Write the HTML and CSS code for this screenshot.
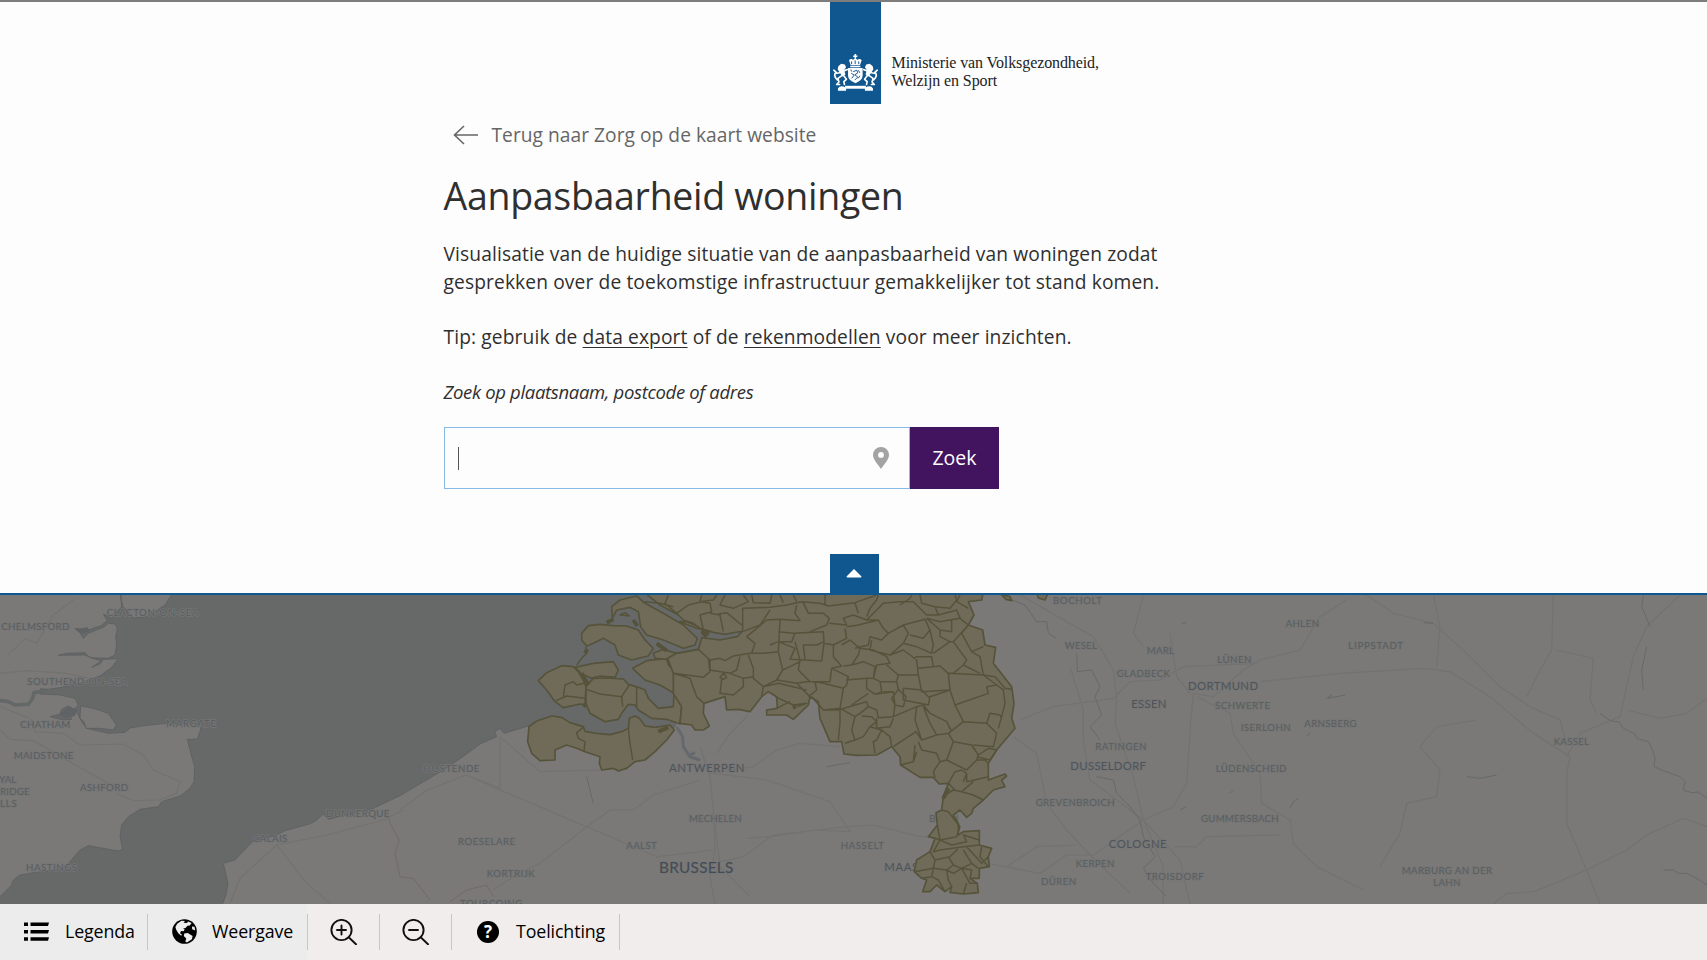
FILE: index.html
```html
<!DOCTYPE html>
<html lang="nl">
<head>
<meta charset="utf-8">
<title>Aanpasbaarheid woningen</title>
<link rel="stylesheet" href="styles.css">
</head>
<body>
<div class="page">
  <section class="panel">
    <header class="brand">
      <div class="ribbon">
        <svg class="arms" viewBox="0 0 138 114" fill="none" stroke="#fff" stroke-width="5" stroke-linecap="round" stroke-linejoin="round">
          <g fill="#fff" stroke="none">
            <path d="M66 0h5v5h4v4h-4v6h-5V9h-4V5h4z"/>
            <path d="M49 19q6-7 13-1l6-5 7 5q7-6 13 1l-5 15H54z"/>
            <path d="M53 36h31v5H53z"/>
            <path d="M46 43h45v23q0 14-22 24-23-10-23-24z"/>
            <path d="M37 98h64v9H37z"/>
            <path d="M15 106q5-9 17-6l8 4v9H15zM123 106q-5-9-17-6l-8 4v9h25z"/>
            <path d="M16 38l9-8 11 2 4 9-6 8 4 14-9 6-9-12-6-10zM122 38l-9-8-11 2-4 9 6 8-4 14 9 6 9-12 6-10z"/>
          </g>
          <path d="M33 52l11-4M28 66l-13 9 3 11-7 8h9M33 67l8 11-8 7 2 9M20 58L8 60M13 80Q-1 66 9 56L2 50M105 52l-11-4M110 66l13 9-3 11 7 8h-9M105 67l-8 11 8 7-2 9M118 58l12 2M125 80q14-14 4-24l7-6"/>
          <path stroke="#11578f" stroke-width="3" d="M57 24v6M68 21v9M79 24v6M63 54l10-4 3 8-9 6 9 7-8 8M57 60l8 5-7 9M78 51l4 6M55 49l2 4M82 68l-4 6"/>
        </svg>
      </div>
      <p class="ministry">Ministerie van Volksgezondheid,<br>Welzijn en Sport</p>
    </header>
    <main class="intro">
      <a class="back">
        <svg class="back-arrow" viewBox="0 0 26 20" fill="none" stroke="#666" stroke-width="1.6"><path d="M11 1L1.500 10 11 19M1.500 10H25"/></svg>
        <span>Terug naar Zorg op de kaart website</span>
      </a>
      <h1 class="title">Aanpasbaarheid woningen</h1>
      <p class="text lead">Visualisatie van de huidige situatie van de aanpasbaarheid van woningen zodat<br>gesprekken over de toekomstige infrastructuur gemakkelijker tot stand komen.</p>
      <p class="text tip">Tip: gebruik de <a class="link">data export</a> of de <a class="link">rekenmodellen</a> voor meer inzichten.</p>
      <p class="hint">Zoek op plaatsnaam, postcode of adres</p>
      <div class="search">
        <div class="field">
          <span class="caret"></span>
          <svg class="pin" viewBox="0 0 16 22"><path fill="#a3a3a3" fill-rule="evenodd" d="M8 0a8 8 0 0 0-8 8c0 5 5 9 8 14 3-5 8-9 8-14a8 8 0 0 0-8-8zm0 5a2.900 2.900 0 1 1 0 5.800A2.900 2.900 0 0 1 8 5z"/></svg>
        </div>
        <button class="submit">Zoek</button>
      </div>
    </main>
    <div class="collapse"><svg class="collapse-icon" viewBox="0 0 16 9"><path fill="#fff" d="M8 0l7.500 7.500q0 1-1 1h-13q-1 0-1-1z"/></svg></div>
  </section>

  <svg class="map" viewBox="0 15 5121 927" preserveAspectRatio="none">
    <rect class="sea" y="0" width="5121" height="960"/>
    <!-- England -->
    <path class="land" d="M-10 5H520L495 45 470 62 440 80 400 84 380 60 368 50 362 15 365 50 335 85 310 72 322 92 305 106 265 120 225 115 240 128 250 145 265 130 310 112 325 100 345 102 352 115 347 140 350 165 345 195 325 205 270 203 255 188 200 190 175 196 255 195 280 206 305 212 275 232 300 222 310 208 355 206 335 232 300 258 270 268 240 280 185 292 145 298 122 296 120 312 180 315 225 325 235 345 222 358 205 348 185 358 180 372 150 380 190 390 215 388 208 370 230 365 245 395 260 415 325 430 375 427 390 414 440 406 500 400 605 402 600 425 592 447 562 448 575 500 584 530 582 575 570 595 540 618 485 635 475 650 420 658 385 680 365 705 360 740 368 778 355 783 265 767 240 780 210 815 185 838 100 848 60 855 40 870 35 885-10 930Z"/>
    <path class="land" d="M242 348L280 355 325 370 349 405 340 420 300 415 258 415 252 395 240 385Z"/>
    <path class="inlet" d="M0 332L22 334 45 345 85 343 98 325 102 308 124 304"/>
    <path class="dense-water" d="M180 372L205 352 232 358 225 378 195 385ZM225 118L262 112 270 122 245 132Z"/>
    <!-- Continent -->
    <path class="land" d="M660 960L678 915 684 880 670 820 705 810 757 755 830 735 855 722 935 700 950 690 970 672 985 688 1120 655 1200 617 1330 540 1400 492 1440 462 1490 440 1484 425 1500 415 1512 430 1585 408 1900 470 2025 410 2040 260 2700 5H5131V960Z"/>
    <path class="inlet scheldt" d="M2030 410L2048 440 2050 470 2070 500 2100 510M2070 495L2085 488"/>
    <!-- Roads, rivers and borders -->
    <g class="roads">
      <path d="M0 250L80 242 200 250 290 270M20 200L75 145 110 160 160 75 220 30M0 350L90 385 105 425 190 430 240 465 370 462 430 495 460 540 540 575 530 610 480 630 400 632 350 610M0 420L30 448 100 452 200 510 360 600"/>
      <path d="M690 940L720 865 830 765 980 735 1150 690 1210 660M830 765L920 880 990 940M1200 660L1280 600 1400 555 1500 600 1760 710 1970 800 2060 790 2140 780M1500 440V595L1400 555M1760 710L1620 820 1540 860 1480 900M1760 710L1830 660 1900 660 1960 615 2100 570M1500 440L1620 545 1800 540M2100 470L2130 560 2140 660 2145 780 2130 860 2145 942M2140 660L2160 830 2250 920M2150 490L2190 430 2240 380 2250 340"/>
      <path d="M2140 550L2300 570 2490 635 2550 725 2450 720 2310 740 2240 745M2140 820L2230 800 2320 735 2540 710 2620 705 2760 740 2810 740M2130 550L2260 530 2330 480 2400 460 2520 470M2960 820L3120 850 3200 795 3280 795 3430 690 3520 650 3560 580 3570 420 3580 310 3640 320 3730 240 3780 210 3900 180 3960 80 4040 30M3020 830L3110 770 3230 765"/>
      <path d="M3060 15L3280 140 3340 240 3350 320 3345 400 3400 560 3430 690 3490 830 3490 942M3060 390L3160 350 3340 325 3390 275 3480 270 3550 230 3770 220M3430 15L3400 130 3430 170M3510 130L3530 260 3570 310M3210 230L3250 360 3250 450 3270 570 3430 690 3540 810 3570 942M3040 440L3110 490 3140 640 3200 720 3270 795 3390 910M3590 320L3690 370 3700 430 3780 550 3785 640 3870 690 3880 760 3950 830 4090 900M3520 770L3590 770 3620 740 3840 735M3780 275L4020 250 4270 235 4350 245 4470 320 4600 430 4710 500 4700 550 4700 700 4760 840 4800 942M4100 15L4180 70 4300 100 4400 190 4500 290 4590 350 4680 390 4700 460M4300 15L4320 110 4310 230M4700 500L4740 430 4860 380 4900 200 4940 110 5040 15M4880 360L4980 385 5060 370 5121 325M4480 942L4520 910 4600 905 4760 840 4880 780 4940 735 5050 685 5121 710M4660 15L4655 180 4620 240 4580 320M4430 390L4310 410 4260 470 4320 540 4310 620 4220 640 4200 730 4140 830M4670 180L4780 205 4770 330 4790 370"/>
      <path class="stream" d="M3010 20L3075 45 3110 95 3140 95 3145 130 3170 145M3230 190L3232 245 3275 240 3300 290 3285 320 3305 375 3270 410 3300 450M3290 560L3340 570 3350 610 3390 650 3420 690 3430 740 3465 800 3430 835 3460 880 3500 920M4930 15L4925 50 4950 110M4940 170L4925 240 4930 300M4800 370L4830 392 4858 396 4870 415 4905 432 4910 445 4945 455 4958 480 4965 505 4962 530 4990 542 5040 560 5055 575 5050 600 5075 608 5095 606 5121 625M4990 840L5020 840 5035 850 5060 850 5085 862 5121 885M3980 325L3995 315 3985 325 4035 315M3690 610L3700 600M3540 660L3560 650M3870 655L3880 635 3895 625M4400 560L4440 565 4490 555M3545 100L3560 98M3920 440L3930 428M4270 98L4300 100M1760 560L1780 640M2480 530L2550 518"/>
      <path class="frontier" d="M1160 660L1170 700 1198 750 1185 790 1200 860 1240 865 1290 930M1350 935L1400 900 1460 885 1480 920"/>
    </g>
    <!-- Place names -->
    <g class="names">
      <text x="320" y="77" textLength="275">CLACTON-ON-SEA</text>
      <text x="4" y="121" textLength="204">CHELMSFORD</text>
      <text x="82" y="284" textLength="300">SOUTHEND-ON-SEA</text>
      <text x="61" y="413" textLength="150">CHATHAM</text>
      <text x="498" y="412" textLength="150">MARGATE</text>
      <text x="41" y="506" textLength="179">MAIDSTONE</text>
      <text x="240" y="604" textLength="144">ASHFORD</text>
      <text x="-2" y="579" textLength="51">YAL</text>
      <text x="0" y="615" textLength="89">RIDGE</text>
      <text x="0" y="651" textLength="50">LLS</text>
      <text x="78" y="842" textLength="153">HASTINGS</text>
      <text x="978" y="682" textLength="190">DUNKERQUE</text>
      <text x="759" y="756" textLength="103">CALAIS</text>
      <text x="1270" y="546" textLength="168">OOSTENDE</text>
      <text x="1374" y="766" textLength="171">ROESELARE</text>
      <text x="1460" y="861" textLength="144">KORTRIJK</text>
      <text x="1380" y="952" textLength="187">TOURCOING</text>
      <text x="1879" y="776" textLength="91">AALST</text>
      <text x="2067" y="695" textLength="158">MECHELEN</text>
      <text x="2522" y="776" textLength="130">HASSELT</text>
      <text x="2788" y="695" textLength="87">BREIN</text>
      <text x="3159" y="41" textLength="147">BOCHOLT</text>
      <text x="3194" y="178" textLength="97">WESEL</text>
      <text x="3440" y="192" textLength="82">MARL</text>
      <text x="3652" y="219" textLength="102">LÜNEN</text>
      <text x="3857" y="110" textLength="100">AHLEN</text>
      <text x="3350" y="261" textLength="160">GLADBECK</text>
      <text x="3645" y="356" textLength="165">SCHWERTE</text>
      <text x="3722" y="424" textLength="150">ISERLOHN</text>
      <text x="3913" y="411" textLength="157">ARNSBERG</text>
      <text x="3286" y="481" textLength="153">RATINGEN</text>
      <text x="3647" y="546" textLength="212">LÜDENSCHEID</text>
      <text x="3107" y="648" textLength="237">GREVENBROICH</text>
      <text x="3603" y="696" textLength="233">GUMMERSBACH</text>
      <text x="3227" y="831" textLength="116">KERPEN</text>
      <text x="3123" y="885" textLength="105">DÜREN</text>
      <text x="3437" y="871" textLength="174">TROISDORF</text>
      <text x="4045" y="178" textLength="164">LIPPSTADT</text>
      <text x="4661" y="465" textLength="106">KASSEL</text>
      <text x="4205" y="853" textLength="271">MARBURG AN DER</text>
      <text x="4300" y="889" textLength="81">LAHN</text>
      <g class="city">
        <text x="2007" y="545" textLength="226">ANTWERPEN</text>
        <text x="2653" y="844" textLength="146">MAASTR</text>
        <text x="3564" y="300" textLength="210">DORTMUND</text>
        <text x="3394" y="355" textLength="105">ESSEN</text>
        <text x="3211" y="541" textLength="227">DUSSELDORF</text>
        <text x="3326" y="775" textLength="174">COLOGNE</text>
      </g>
      <text class="capital" x="1977" y="850" textLength="223">BRUSSELS</text>
    </g>
    <!-- Zeeland and the islands -->
    <g class="region" transform="translate(1200)">
      <path d="M387 410L410 393 455 378 485 382 510 398 550 410 555 424 590 430 630 434 665 425 685 415 688 385 705 378 718 385 735 408 765 412 810 405 823 420 800 450 765 485 735 510 705 515 680 535 655 543 640 535 605 540 598 520 600 500 555 485 530 475 500 465 465 480 465 510 420 512 395 490 383 455Z"/>
      <path d="M415 272L440 248 485 227 520 230 535 245 550 270 558 290 555 345 540 342 490 353 465 335 440 300Z"/>
      <path d="M525 232L580 220 640 215 655 240 645 262 600 258 575 265 545 252Z"/>
      <path d="M558 290L580 265 620 264 670 267 685 283 715 292 735 300 745 325 775 355 820 350 822 310 845 350 840 402 800 388 755 385 715 360 705 345 685 343 665 370 655 388 615 395 570 370 558 340Z"/>
      <path d="M545 130L565 107 600 103 640 107 680 108 715 120 735 150 760 175 745 198 695 210 655 195 645 165 610 145 580 160 560 168 545 150Z"/>
      <path d="M635 50L660 30 710 18 735 40 790 70 850 105 892 145 885 165 850 175 790 150 740 135 722 110 715 65 690 52 650 60 637 85Z"/>
      <path d="M698 235L740 212 800 205 805 225 830 250 820 308 780 285 735 270Z"/>
      <path d="M760 190L790 178 830 190 800 208 765 205ZM838 95L860 95 915 118 890 115ZM660 75L675 68 688 78Z"/>
      <path class="cut" d="M550 412L530 428 535 445 555 455 552 485M685 415L690 460 698 510M490 320L495 285 520 275 530 285 552 280M468 332L500 318 555 325M560 298L600 312 665 320 668 350M665 320L688 285M710 290V350M557 170L560 190 545 205 530 225"/>
      <path class="dense" d="M545 250L565 285M550 340L558 350M770 160L800 182M700 90L712 108M620 98L640 88M775 425L805 412M555 190L562 178M905 125L920 140"/>
    </g>
    <!-- Mainland municipalities -->
    <g class="region" transform="translate(2100)">
      <path d="M-170 5L-120 45 -65 75 -50 90 -20 100 0 115 40 127 75 133 128 123 112 140 60 150 5 143 -5 178 -70 190 -97 205 -80 250 -80 310 -55 350 -60 400 -25 405 -15 420 10 420 28 408 10 370 12 340 75 320 80 360 115 358 150 365 185 320 205 305 230 320 232 355 200 360 200 375 260 375 280 388 325 345 330 320 355 335 360 385 390 455 425 455 432 492 470 496 530 495 575 470 600 500 602 525 660 562 700 562 718 582 745 580 730 620 725 660 708 668 712 705 685 740 705 745 690 785 650 810 643 845 665 865 680 870 668 905 690 905 710 885 735 905 755 890 750 907 790 912 835 908 832 880 810 865 838 865 838 835 868 830 865 800 875 775 838 765 838 722 790 725 775 735 775 700 760 675 780 660 800 682 815 670 820 655 850 630 880 600 915 590 905 570 920 558 915 552 865 570 865 520 890 480 945 415 935 385 942 340 935 290 880 220 887 172 855 165 848 120 805 105 822 75 805 35 845 30 850 5Z"/>
      <path d="M910 15L930 20 935 32 918 28 905 15ZM1010 8L1045 8 1035 30 1015 24Z"/>
      <path class="cut" d="M-165 35L-120 40 -80 50M-95 15L-105 40 -70 70 -35 45 5 35 30 40 35 65 0 75 10 120M0 35L5 15M50 15L40 30 0 35M75 15L60 45 100 55 145 35 130 15M128 120V55L210 52 260 45 305 35 360 40 385 48 465 38 530 15M30 70L60 75 70 125M55 72L80 68 125 105M128 125L180 105 210 60M140 140L200 90 240 88 300 92 285 70 290 45M155 15L160 38 210 40 215 15M240 15L250 38M280 15L290 35M375 15V45M310 38L325 70 370 70 388 85 380 105 330 125M388 100L440 105 430 85 460 75 500 90 535 90M465 38L475 70M500 80L510 55 530 30 535 15M440 110L475 105 535 90 550 115 565 130 545 150 510 140 505 165 465 175"/>
      <path class="cut" d="M-70 190L-5 178 30 210 60 205 75 212 100 198 150 190 190 190 235 185 240 90M140 140L165 160 155 190M235 125L280 130 370 125 372 155 350 165 310 165 315 210 365 213 372 160 400 165 440 145 435 115M235 155L275 155 285 130M210 165L235 155 285 175 270 208 315 210M285 155L300 210 295 240 330 275 345 275 350 300 325 320M145 195L160 235 160 265 190 290 230 270 248 240 235 185M190 290L185 320M248 240L270 230 300 215M230 270L290 280 320 275 390 275 395 235 425 228 400 200 400 165M290 280L330 320M190 290L235 280 320 300M30 210V240L90 250 110 240 120 200M-80 250L10 262 30 245M60 262L70 250 80 262 70 268ZM90 250L130 265 130 290 100 315 60 310 65 268M130 265L160 260M25 205L30 245M-80 250L-30 265 -10 320 12 340M225 320L280 345 320 340 290 350M230 355L270 335"/>
      <path class="cut" d="M345 275L370 280 430 295 420 355 370 360 335 320M395 235L445 260 440 285 430 295M420 355L420 400 415 450M370 360L415 360 465 345 500 335 505 350M445 260L440 270 500 265 520 265 525 230 490 215 455 225 430 228M425 165L450 150 480 175 475 195 455 225M480 175L520 180 560 200 570 220 530 225 520 265M500 265L500 295 525 313 545 305 540 275 520 265M455 345L505 310M525 313L580 305 585 345 580 380 535 383 530 360 505 350 480 370 465 380 420 355M465 380L455 420 465 450 490 440 510 410 530 395 515 380 485 378M465 450L435 460M530 383V415L570 410 580 385M510 410L545 420 530 450 520 455 525 490M545 420L570 440 575 470M580 380L650 350M585 345L575 325 595 298 618 320 610 350ZM540 275L590 275 595 255 560 225M595 298L590 275M550 305L580 305M565 130L610 105 625 130 610 160 570 195 510 180 515 150M610 105L675 88 690 120 670 145 630 135M610 160L650 170 695 190 700 165 690 120M570 195L610 180 650 210 655 255 595 255M640 205L650 200 695 200 700 230 655 235M655 255L665 305 750 300 745 250 720 228 700 230M700 190L750 155 720 140 720 120 680 85M500 90L550 40 600 35 640 35 680 75M600 45L630 25 635 15M680 75L715 75 770 60 780 85 720 95 680 85M715 75L705 50 665 40 660 15M705 50L750 55 770 30 765 15M780 15L770 35 805 55M780 85L805 105 760 155 750 155M720 120L755 125 755 90M760 155L800 210 790 225 760 250 745 250M805 105L785 130 815 185 850 170M815 185L840 200 850 255 745 250M790 225L840 250"/>
      <path class="cut" d="M850 255L885 260 915 295 935 298M850 255L910 300 915 340 905 380 895 415M750 300L765 345 865 310 860 290 890 285 912 300M765 345L790 395 860 400 870 370 900 375 905 385M790 395L745 430 710 435 665 450 648 425 580 470M750 300L690 320 685 345 610 330 610 295 665 300 690 325M650 350L645 390 665 450M670 350L690 400 710 435M650 350L670 345 690 370 740 395 755 425M690 370L675 355M745 430L760 455 740 510 720 515 710 490 665 480 655 455M760 455L815 465 835 495 830 510M820 465L880 470 890 430 860 400M835 495L865 475 890 480 870 510 830 500M600 525L640 515 645 465M640 515L650 485M720 515L700 545 705 562M740 510L800 540 830 510M745 580L765 545 785 540 800 550 800 575 865 560M865 520L855 510 830 510M785 605L820 575M735 615L760 600 785 605 820 615 850 630M745 580L765 600M800 550L790 575M725 660L745 665 780 710 770 740 720 750M712 705L720 750 705 745M720 750L755 765 800 755 790 735 838 750M720 750L700 785 720 780 790 770 838 765M690 785L705 810 750 800 780 770M705 810L700 835 740 840 760 825 745 800M643 845L700 835 695 860 665 865M760 825L785 835 815 820 790 780M785 835L760 850 740 840M740 840L745 870 755 890M695 860L715 870 735 905M815 820L835 835M800 770L845 820 865 800M810 865L815 840 785 835M800 880L790 912M785 835L810 880 832 880M845 770L840 800 865 830"/>
      <path class="dense" d="M278 352L288 350M730 625L745 595M5 120L28 130"/>
    </g>
  </svg>

  <nav class="toolbar">
    <div class="tool legend">
      <svg class="ico-list" viewBox="0 0 25 19"><path d="M0 .5h4v3.500H0zM0 8h4v3.500H0zM0 15.200h4v3.500H0zM6.500.5H25l-1 3.500H6.500zM6.500 8H25l-1 3.500H6.500zM6.500 15.200H25l-1 3.500H6.500z"/></svg>
      <span>Legenda</span>
    </div>
    <div class="tool view">
      <svg class="ico-globe" viewBox="0 0 25 25"><circle cx="12.500" cy="12.500" r="12.300"/><path fill="#eee" d="M5.200 4.800l4.300-3 3.500.3-1.500 1.700 3.500.2 1-1.400 3.600 1.400-1.800 2.500-2.300.2-2 2.300-2.500.6 1.700 1-1.200 1.600-2.500-.2-1 2.200 1.800 1.300-.5 1.300-3-2.600-2.200-3.700-.7-2.600zM12.300 14.500l3.500-.4 4.800 2.800-.7 3.400-5 3.300-1.600-1 1-3.200-2.500-2.300zM20 7.500l2.500.3.700 3.700-3-1.200z"/></svg>
      <span>Weergave</span>
    </div>
    <div class="tool zoom"><svg class="ico-zoom" viewBox="0 0 27 26"><circle cx="11.500" cy="11" r="10.100"/><path d="M18.700 18.300L26 25.300M7 11h9M11.500 6.500v9"/></svg></div>
    <div class="tool zoom"><svg class="ico-zoom" viewBox="0 0 27 26"><circle cx="11.500" cy="11" r="10.100"/><path d="M18.700 18.300L26 25.300M7 11h9"/></svg></div>
    <div class="tool help">
      <span class="ico-help">?</span>
      <span>Toelichting</span>
    </div>
  </nav>
</div>
</body>
</html>
```
FILE: styles.css
```css
* { box-sizing: border-box; }
body { margin: 0; font-family: "Open Sans", "Noto Sans", sans-serif; color: #2f2f2f; background: #fdfdfd; }
p, h1 { margin: 0; }
.page { width: 1707px; height: 960px; display: flex; flex-direction: column; overflow: hidden; }
.panel { height: 595px; flex: none; display: flex; flex-direction: column; border-top: 2px solid #7d7d7d; border-bottom: 2px solid #11578f; background: #fdfdfd; }
.brand { display: flex; height: 102px; padding-left: 829.5px; flex: none; }
.ribbon { width: 51px; background: #11578f; display: flex; justify-content: center; align-items: flex-end; padding-bottom: 13px; }
.arms { width: 45px; height: 37px; }
.ministry { margin: 52px 0 0 11px; font: 16px/18px "Liberation Serif", serif; letter-spacing: -0.1px; color: #222; white-space: nowrap; }
.intro { padding-left: 443.5px; display: flex; flex-direction: column; align-items: flex-start; flex: 1; white-space: nowrap; }
.back { display: flex; align-items: center; gap: 13px; margin: 16px 0 0 9px; height: 29px; font-size: 19.2px; letter-spacing: 0.03px; color: #666; }
.back-arrow { width: 26px; height: 20px; }
.title { margin-top: 17px; font-size: 37.5px; line-height: 60px; font-weight: 400; letter-spacing: -0.3px; }
.text { font-size: 19.2px; line-height: 28px; letter-spacing: 0.12px; }
.lead { margin-top: 14px; }
.tip { margin-top: 27px; }
.link { text-decoration: underline; text-underline-offset: 3px; }
.hint { margin-top: 27px; font-size: 18.5px; line-height: 28px; font-style: italic; letter-spacing: -0.33px; }
.search { display: flex; margin-top: 21px; height: 62px; }
.field { width: 466.5px; border: 1px solid #86bbe8; display: flex; align-items: center; justify-content: space-between; padding: 0 20px 0 13px; }
.caret { width: 1px; height: 23px; background: #555; }
.pin { width: 16px; height: 22px; }
.submit { width: 89px; border: 0; padding: 0 0 2px; background: #42145f; color: #fff; font: 500 19.5px "Open Sans", sans-serif; }
.collapse { width: 49px; height: 39px; flex: none; margin-left: 829.5px; background: #11578f; display: flex; justify-content: center; padding-top: 15px; }
.collapse-icon { width: 16px; height: 9px; }

.map { display: block; width: 1707px; height: 309px; flex: none; }
.sea { fill: #676969; }
.land { fill: #7a7977; stroke: #5b5f62; stroke-width: 2.500; }
.inlet { fill: none; stroke: #656868; stroke-width: 11; }
.dense-water { fill: #5f6365; }
.scheldt { stroke: #65696d; stroke-width: 9; }
.roads { fill: none; stroke: #727271; stroke-width: 3.500; }
.stream { stroke: #66696b; stroke-width: 3; }
.frontier { stroke: #736967; stroke-width: 3; }
.names { font-family: Lato, "Open Sans", sans-serif; font-size: 29px; fill: #595d61; stroke: #757675; stroke-width: 5; stroke-linejoin: round; paint-order: stroke; }
.city { font-size: 34px; fill: #4f545b; }
.capital { font-size: 46px; fill: #434b56; }
.region path { fill: #706b59; stroke: #56533b; stroke-width: 5; stroke-linejoin: round; }
.region .cut { fill: none; stroke-width: 4.500; }
.region .dense { fill: none; stroke-width: 12; }

.toolbar { flex: 1; display: flex; align-items: center; background: linear-gradient(90deg, #ececec 307px, #f1eded 307px); color: #000; font-size: 17.8px; }
.tool { height: 36px; display: flex; align-items: center; padding-bottom: 1px; border-right: 1px solid #c9c6c6; white-space: nowrap; }
.legend { width: 148px; padding-left: 24px; gap: 16px; }
.view { width: 160px; padding-left: 24px; gap: 15px; }
.zoom { width: 72px; padding-left: 21.5px; }
.help { width: 168px; padding-left: 25px; gap: 17px; }
.tool span { letter-spacing: -0.1px; padding-bottom: 2px; }
.ico-list { width: 25px; height: 19px; }
.ico-globe { width: 25px; height: 25px; }
.ico-zoom { width: 27px; height: 26px; fill: none; stroke: #111; stroke-width: 1.900; stroke-linecap: round; }
.ico-help { width: 22px; height: 22px; border-radius: 50%; background: #000; color: #fff; font: bold 17px/22px "Open Sans", sans-serif; text-align: center; }
```
